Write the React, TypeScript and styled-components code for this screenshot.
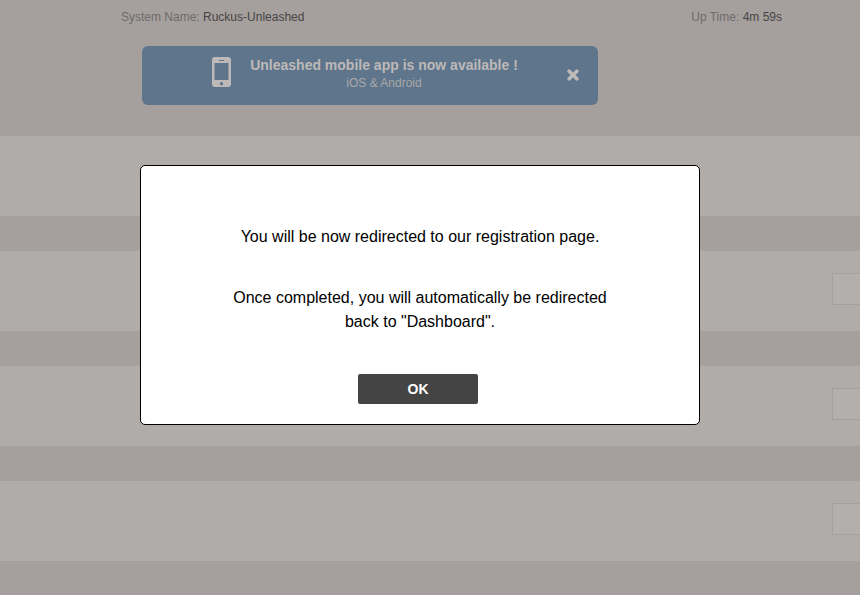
import React from 'react';
import styled, { createGlobalStyle } from 'styled-components';

const GlobalStyle = createGlobalStyle`
  html, body {
    margin: 0;
    padding: 0;
    height: 100%;
    overflow: hidden;
    background: #a5a09e;
    font-family: "Liberation Sans", Arial, sans-serif;
  }
`;

const Page = styled.div`
  width: 860px;
  height: 595px;
  overflow: hidden;
  display: flex;
  flex-direction: column;
  background: #a5a09e;
`;

const Header = styled.header`
  height: 136px;
  flex: none;
  box-sizing: border-box;
  padding-top: 10px;
`;

const StatusBar = styled.div`
  display: flex;
  justify-content: space-between;
  padding: 0 78px 0 121px;
  height: 14px;
  font-size: 12px;
  line-height: 14px;
`;

const StatusLabel = styled.span`
  color: #6e6a6a;
`;

const StatusValue = styled.span`
  color: #484444;
`;

const Banner = styled.div`
  position: relative;
  width: 456px;
  height: 59px;
  margin: 22px 0 0 142px;
  border-radius: 6px;
  background: #5e758c;
  display: flex;
  flex-direction: column;
  align-items: center;
  padding-left: 28px;
  box-sizing: border-box;
`;

const BannerTitle = styled.div`
  margin-top: 10px;
  font-size: 14px;
  line-height: 18px;
  font-weight: bold;
  color: #bdb9b8;
`;

const BannerSub = styled.div`
  margin-top: 2px;
  font-size: 12px;
  line-height: 15px;
  color: #aaa8a8;
`;

const PhoneIcon = styled.svg`
  position: absolute;
  left: 70px;
  top: 11px;
`;

const CloseIcon = styled.svg`
  position: absolute;
  left: 425px;
  top: 23px;
`;

const Row = styled.div`
  height: 80px;
  flex: none;
  background: #b0acaa;
  box-sizing: border-box;
  padding: 22px 0 0 832px;
`;

const Gap = styled.div`
  height: 35px;
  flex: none;
`;

const RowBox = styled.div`
  width: 60px;
  height: 32px;
  box-sizing: border-box;
  border: 1px solid #a5a09e;
  background: #b3afad;
`;

const Modal = styled.div`
  position: absolute;
  left: 140px;
  top: 165px;
  width: 560px;
  height: 260px;
  box-sizing: border-box;
  border: 1px solid #000;
  border-radius: 5px;
  background: #fff;
  display: flex;
  flex-direction: column;
  align-items: center;
  padding-top: 59px;
  color: #000;
  font-size: 16px;
  line-height: 24px;
  text-align: center;
`;

const Message = styled.p`
  margin: 0 0 37px;
`;

const OkButton = styled.button`
  width: 120px;
  height: 30px;
  margin: 3px 4px 0 0;
  border: 0;
  border-radius: 2px;
  background: #444;
  color: #fff;
  font-family: inherit;
  font-size: 14px;
  font-weight: bold;
  padding: 0;
`;

export default function App() {
  return (
    <Page>
      <GlobalStyle />
      <Header>
        <StatusBar>
          <span>
            <StatusLabel>System Name: </StatusLabel>
            <StatusValue>Ruckus-Unleashed</StatusValue>
          </span>
          <span>
            <StatusLabel>Up Time: </StatusLabel>
            <StatusValue>4m 59s</StatusValue>
          </span>
        </StatusBar>
        <Banner>
          <PhoneIcon width="19" height="30" viewBox="0 0 19 30">
            <path
              fill="#bdb9b8"
              fillRule="evenodd"
              d="M3 0h13a3 3 0 0 1 3 3v24a3 3 0 0 1-3 3H3a3 3 0 0 1-3-3V3a3 3 0 0 1 3-3zM2.500 6v17h14V6zM7 3v1h5V3zM9.500 25a1.700 1.700 0 1 0 0 3.400 1.700 1.700 0 0 0 0-3.400z"
            />
          </PhoneIcon>
          <BannerTitle>Unleashed mobile app is now available !</BannerTitle>
          <BannerSub>iOS &amp; Android</BannerSub>
          <CloseIcon width="12" height="12" viewBox="0 0 12 12">
            <path
              fill="#bdb9b8"
              d="M3 .5 6 3.500 9 .5a1 1 0 0 1 1.400 0l1.100 1.100a1 1 0 0 1 0 1.400L8.500 6l3 3a1 1 0 0 1 0 1.400l-1.100 1.100a1 1 0 0 1-1.400 0L6 8.500l-3 3a1 1 0 0 1-1.400 0L.5 10.400a1 1 0 0 1 0-1.400l3-3-3-3a1 1 0 0 1 0-1.400L1.600.5A1 1 0 0 1 3 .5z"
            />
          </CloseIcon>
        </Banner>
      </Header>
      <Row />
      <Gap />
      <Row><RowBox /></Row>
      <Gap />
      <Row><RowBox /></Row>
      <Gap />
      <Row><RowBox /></Row>
      <Modal>
        <Message>You will be now redirected to our registration page.</Message>
        <Message>
          Once completed, you will automatically be redirected
          <br />
          back to "Dashboard".
        </Message>
        <OkButton>OK</OkButton>
      </Modal>
    </Page>
  );
}
